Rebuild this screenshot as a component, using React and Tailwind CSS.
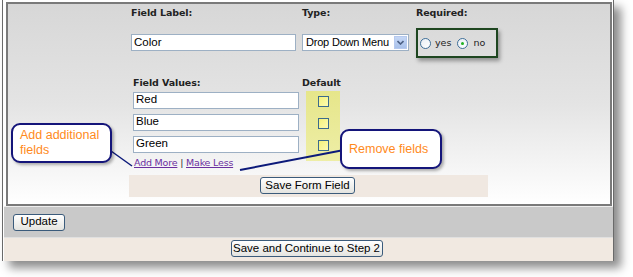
import React from 'react';

const verdana = { fontFamily: '"DejaVu Sans", Verdana, sans-serif' };
const arial = { fontFamily: '"Liberation Sans", Arial, sans-serif' };

function TextBox({ value, className = '' }) {
  return (
    <div
      className={`h-[17px] bg-white border border-[#9db0c4] flex items-center pl-[2px] text-[11.5px] text-black leading-none ${className}`}
      style={arial}
    >
      {value}
    </div>
  );
}

function Button({ children, className = '' }) {
  return (
    <div
      className={`h-[17px] flex items-center justify-center whitespace-nowrap rounded-[3px] border border-[#3b5b7b] bg-gradient-to-b from-white to-[#e4e4e0] text-[11.5px] text-black leading-none ${className}`}
      style={arial}
    >
      {children}
    </div>
  );
}

function Radio({ checked }) {
  return (
    <span className="w-[11px] h-[11px] rounded-full border border-[#3f6f99] bg-gradient-to-br from-[#e8eef4] to-white flex items-center justify-center">
      {checked && <span className="w-[3px] h-[3px] rounded-full bg-[#21b121]" />}
    </span>
  );
}

function Check() {
  return <span className="block w-[11px] h-[11px] border border-[#3c6b8c] bg-gradient-to-br from-[#f4f27a] to-[#fdfbb0]" />;
}

export default function App() {
  return (
    <div className="w-[633px] h-[277px] bg-white relative overflow-hidden">
      {/* Outer frame */}
      <div className="absolute left-[2px] top-0 w-[612px] h-[261px] border-x border-[#6a6a6a] bg-white shadow-[7px_7px_9px_rgba(0,0,0,0.45)] flex flex-col">
        <div className="ml-[3px] mr-[1px] mt-[2px] h-[204px] border-2 border-[#7a7a7a] bg-gradient-to-b from-[#d7d7d7] via-[#e4e4e4] to-white pl-[123px] pt-[2px] flex flex-col">
          {/* Row 1 */}
          <div className="flex text-[9.5px] font-bold text-[#222] tracking-[-0.1px]" style={verdana}>
            <div className="w-[171px]">Field Label:</div>
            <div className="w-[114px]">Type:</div>
            <div>Required:</div>
          </div>
          <div className="flex mt-[8px] h-[29px]">
            <div className="w-[171px] pt-[6px]">
              <TextBox value="Color" className="w-[165px]" />
            </div>
            <div className="w-[114px] pt-[6px]">
              <div className="w-[107px] h-[17px] bg-white border border-[#9db0c4] flex items-center pl-[3px] text-[11px] text-black leading-none relative tracking-[-0.2px]" style={arial}>
                Drop Down Menu
                <span className="absolute right-[1px] top-[1px] w-[13px] h-[13px] bg-gradient-to-b from-[#c5d7f5] to-[#a9c1ea] border border-[#b6c9ee] flex items-center justify-center">
                  <svg width="7" height="5" viewBox="0 0 7 5"><path d="M0.5 1 L3.5 4 L6.5 1" stroke="#4d6185" strokeWidth="1.6" fill="none" /></svg>
                </span>
              </div>
            </div>
            <div className="w-[82px] h-[30px] border-2 border-[#1e4620] shadow-[2px_3px_4px_rgba(0,0,0,0.35)] flex items-center pl-[2px] text-[9.5px] text-[#222]" style={verdana}>
              <Radio />
              <span className="ml-[4px]">yes</span>
              <span className="ml-[6px]"><Radio checked /></span>
              <span className="ml-[5px]">no</span>
            </div>
          </div>
          {/* Row 2 */}
          <div className="flex mt-[19px] pl-[2px] text-[9.5px] font-bold text-[#222] tracking-[-0.1px]" style={verdana}>
            <div className="w-[169px]">Field Values:</div>
            <div>Default</div>
          </div>
          <div className="flex pl-[2px]">
            <div className="w-[173px] flex flex-col gap-[5px] pt-[1px]">
              <TextBox value="Red" className="w-[166px]" />
              <TextBox value="Blue" className="w-[166px]" />
              <TextBox value="Green" className="w-[166px]" />
              <div className="text-[9.5px] text-[#6a2fa0] mt-[-1px] pl-[1px] leading-[12px] tracking-[-0.2px] whitespace-nowrap" style={verdana}>
                <span className="underline">Add More</span>
                <span className="text-[#333]"> | </span>
                <span className="underline">Make Less</span>
              </div>
            </div>
            <div className="w-[34px] h-[70px] bg-gradient-to-b from-[#e6e68a] to-[#eeeea6] flex flex-col items-center gap-[11px] pt-[5px]">
              <Check />
              <Check />
              <Check />
            </div>
          </div>
          <div className="mt-[6px] ml-[-2px] w-[359px] h-[22px] bg-[#f0e8e1] flex items-center justify-center">
            <Button className="w-[95px] ml-[-2px]">Save Form Field</Button>
          </div>
        </div>
        <div className="ml-[1px] h-[1px] bg-[#efefef]" />
        <div className="ml-[1px] h-[31px] bg-[#c9c9c9] flex items-center pl-[9px] border-b border-[#e0e0e0]">
          <Button className="w-[52px]">Update</Button>
        </div>
        <div className="ml-[1px] flex-1 bg-[#f1e9e1] flex items-start justify-center pt-[2px]">
          <Button className="w-[152px] ml-[-4px]">Save and Continue to Step 2</Button>
        </div>
      </div>

      {/* Callout connector lines */}
      <svg className="absolute left-0 top-0" width="633" height="277">
        <path d="M104 146 L132 166" stroke="#0c1a7a" strokeWidth="1.5" fill="none" />
        <path d="M344 150 L240 170" stroke="#0c1a7a" strokeWidth="2" fill="none" />
      </svg>

      {/* Callouts */}
      <div className="absolute left-[11px] top-[123px] w-[101px] h-[40px] rounded-[9px] border-2 border-[#14157a] bg-white shadow-[2px_2px_3px_rgba(0,0,0,0.3)] pl-[7px] pt-[3px] text-[12.5px] leading-[15px] text-[#ff8a1c]" style={arial}>
        Add additional fields
      </div>
      <div className="absolute left-[340px] top-[129px] w-[102px] h-[40px] rounded-[9px] border-2 border-[#14157a] bg-white shadow-[2px_2px_3px_rgba(0,0,0,0.3)] flex items-center pl-[7px] text-[12.5px] text-[#ff8a1c]" style={arial}>
        Remove fields
      </div>
    </div>
  );
}
